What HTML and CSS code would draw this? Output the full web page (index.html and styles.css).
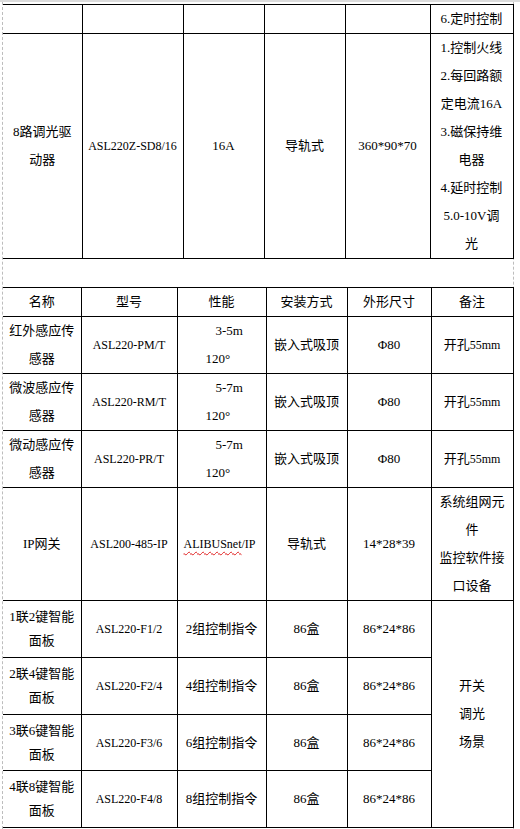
FILE: index.html
```html
<!DOCTYPE html>
<html lang="zh">
<head>
<meta charset="utf-8">
<title>产品参数表</title>
<link rel="stylesheet" href="styles.css">
</head>
<body>
<div class="topbar"></div>
<div class="page">
  <table class="spec spec-top">
    <colgroup>
      <col class="t1"><col class="t2"><col class="t3"><col class="t4"><col class="t5"><col class="t6">
    </colgroup>
    <tr class="h29">
      <td></td><td></td><td></td><td></td><td></td><td>6.定时控制</td>
    </tr>
    <tr class="h225">
      <td>8路调光驱<br>动器</td>
      <td class="lat">ASL220Z-SD8/16</td>
      <td>16A</td>
      <td>导轨式</td>
      <td>360*90*70</td>
      <td>1.控制火线<br>2.每回路额<br>定电流16A<br>3.磁保持维<br>电器<br>4.延时控制<br>5.0-10V调<br>光</td>
    </tr>
  </table>

  <table class="spec spec-main">
    <colgroup>
      <col class="m1"><col class="m2"><col class="m3"><col class="m4"><col class="m5"><col class="m6">
    </colgroup>
    <tr class="h28">
      <td>名称</td><td>型号</td><td>性能</td><td>安装方式</td><td>外形尺寸</td><td>备注</td>
    </tr>
    <tr class="h57">
      <td>红外感应传<br>感器</td>
      <td class="lat">ASL220-PM/T</td>
      <td class="perf"><span class="p1">3-5m</span><span class="p2">120°</span></td>
      <td>嵌入式吸顶</td>
      <td>Φ80</td>
      <td>开孔<span class="lat">55mm</span></td>
    </tr>
    <tr class="h56">
      <td>微波感应传<br>感器</td>
      <td class="lat">ASL220-RM/T</td>
      <td class="perf"><span class="p1">5-7m</span><span class="p2">120°</span></td>
      <td>嵌入式吸顶</td>
      <td>Φ80</td>
      <td>开孔<span class="lat">55mm</span></td>
    </tr>
    <tr class="h57">
      <td>微动感应传<br>感器</td>
      <td class="lat">ASL220-PR/T</td>
      <td class="perf"><span class="p1">5-7m</span><span class="p2">120°</span></td>
      <td>嵌入式吸顶</td>
      <td>Φ80</td>
      <td>开孔<span class="lat">55mm</span></td>
    </tr>
    <tr class="h113">
      <td>IP网关</td>
      <td class="lat">ASL200-485-IP</td>
      <td class="lat proto"><span class="spell">ALIBUSnet</span>/IP</td>
      <td>导轨式</td>
      <td>14*28*39</td>
      <td>系统组网元<br>件<br>监控软件接<br>口设备</td>
    </tr>
    <tr class="h57">
      <td class="tight">1联2键智能<br>面板</td>
      <td class="lat">ASL220-F1/2</td>
      <td>2组控制指令</td>
      <td>86盒</td>
      <td>86*24*86</td>
      <td rowspan="4" class="merged">开关<br>调光<br>场景</td>
    </tr>
    <tr class="h57">
      <td class="tight">2联4键智能<br>面板</td>
      <td class="lat">ASL220-F2/4</td>
      <td>4组控制指令</td>
      <td>86盒</td>
      <td>86*24*86</td>
    </tr>
    <tr class="h56">
      <td class="tight">3联6键智能<br>面板</td>
      <td class="lat">ASL220-F3/6</td>
      <td>6组控制指令</td>
      <td>86盒</td>
      <td>86*24*86</td>
    </tr>
    <tr class="h57">
      <td class="tight">4联8键智能<br>面板</td>
      <td class="lat">ASL220-F4/8</td>
      <td>8组控制指令</td>
      <td>86盒</td>
      <td>86*24*86</td>
    </tr>
  </table>
</div>
</body>
</html>
```

FILE: styles.css
```css
html, body {
  margin: 0;
  padding: 0;
  background: #ffffff;
}

body {
  color: #000000;
  font-family: "Liberation Serif", "Noto Sans CJK SC", serif;
  font-size: 13px;
}

.topbar {
  height: 2px;
  background: #dcdcdc;
}

.page {
  margin-left: 2px;
  width: 510px;
  min-height: 825px;
  padding-top: 2px;
  border-left: 1px dashed #bdbdbd;
  border-right: 1px dashed #bdbdbd;
}

.spec {
  border-collapse: collapse;
  table-layout: fixed;
  width: 510px;
}

.spec td {
  border: 1px solid #000000;
  padding: 0;
  text-align: center;
  vertical-align: middle;
  line-height: 28px;
  white-space: nowrap;
  overflow: hidden;
}

.spec td:first-child {
  border-left: none;
}

.spec-main {
  margin-top: 28px;
}

/* top table columns */
.t1 { width: 79px; }
.t2 { width: 101px; }
.t3 { width: 81px; }
.t4 { width: 81px; }
.t5 { width: 85px; }
.t6 { width: 83px; }

/* main table columns */
.m1 { width: 78px; }
.m2 { width: 96px; }
.m3 { width: 89px; }
.m4 { width: 81px; }
.m5 { width: 84px; }
.m6 { width: 82px; }

/* row heights */
.h28 { height: 28px; }
.h29 { height: 29px; }
.h56 { height: 56px; }
.h57 { height: 57px; }
.h113 { height: 113px; }
.h225 { height: 225px; }

.lat {
  font-size: 12px;
}

.spec td.perf {
  text-align: left;
}

.perf span {
  display: block;
}

.perf .p1 {
  padding-left: 38px;
}

.perf .p2 {
  padding-left: 28px;
}

.spec td.proto {
  text-align: left;
  padding-left: 6px;
}

.spell {
  text-decoration: underline wavy #e02020;
  text-decoration-thickness: 1px;
  text-underline-offset: 3px;
}

.spec td.tight {
  line-height: 24px;
}

.spec td.merged {
  line-height: 28px;
}
```
